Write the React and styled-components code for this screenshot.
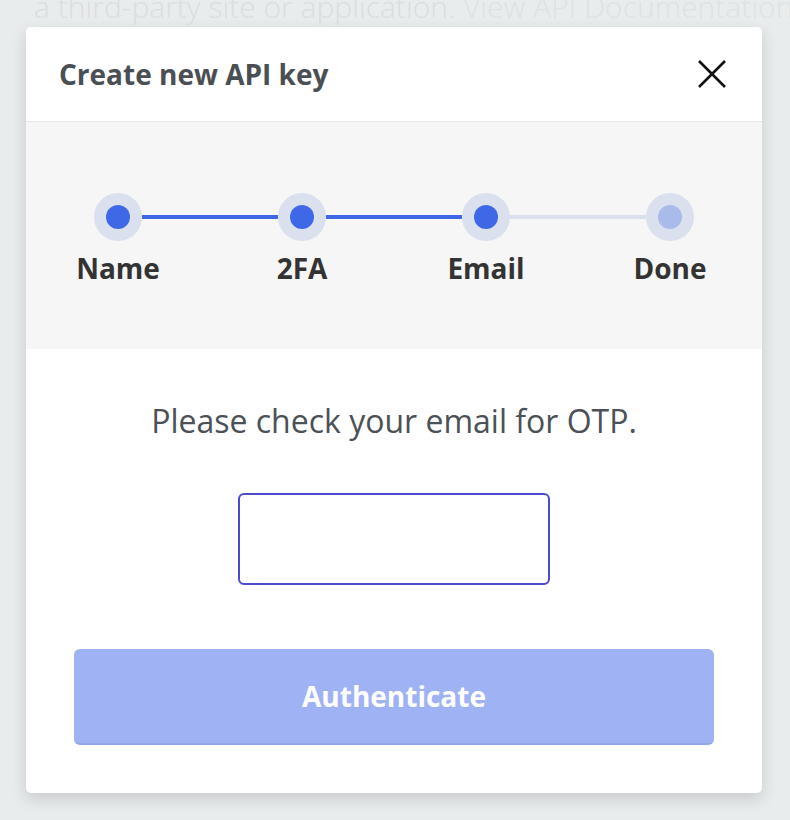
import React, { useState } from 'react';
import styled, { createGlobalStyle } from 'styled-components';

const GlobalStyle = createGlobalStyle`
    html, body {
        margin: 0;
        padding: 0;
        background: #e9eced;
        font-family: "Open Sans", "Liberation Sans", sans-serif;
    }
`;

const steps = [
    { label: 'Name', done: true },
    { label: '2FA', done: true },
    { label: 'Email', done: true },
    { label: 'Done', done: false },
];

function App() {
    const [otp, setOtp] = useState('');

    return (
        <Page>
            <GlobalStyle />
            <BehindText>
                a third-party site or application. <span>View API Documentation</span>
            </BehindText>
            <Modal>
                <Header>
                    <Title>Create new API key</Title>
                    <CloseButton aria-label="Close">
                        <svg width="30" height="30" viewBox="0 0 30 30">
                            <path d="M2 2 L28 28 M28 2 L2 28" stroke="#111" strokeWidth="2.6" fill="none" />
                        </svg>
                    </CloseButton>
                </Header>

                <StepperArea>
                    <Stepper>
                        {steps.map((step, i) => (
                            <React.Fragment key={step.label}>
                                {i > 0 && <Connector $active={step.done} />}
                                <Step>
                                    <Dot $active={step.done} />
                                    <StepLabel>{step.label}</StepLabel>
                                </Step>
                            </React.Fragment>
                        ))}
                    </Stepper>
                </StepperArea>

                <Body>
                    <Message>Please check your email for OTP.</Message>
                    <OtpInput value={otp} onChange={(e) => setOtp(e.target.value)} />
                    <SubmitButton disabled={!otp}>Authenticate</SubmitButton>
                </Body>
            </Modal>
        </Page>
    );
}

const Page = styled.div`
    width: 790px;
    height: 820px;
    overflow: hidden;
    padding: 0 28px 0 26px;
    box-sizing: border-box;
`;

const BehindText = styled.p`
    margin: -14px -40px 0 8px;
    height: 41px;
    font-size: 30px;
    font-weight: 300;
    line-height: 41px;
    color: #d9dee0;
    white-space: nowrap;

    span {
        color: #dde2e6;
    }
`;

const Modal = styled.div`
    background: #fff;
    border-radius: 5px;
    box-shadow: 0 6px 16px rgba(0, 0, 0, 0.14);
    overflow: hidden;
`;

const Header = styled.div`
    height: 94px;
    display: flex;
    align-items: center;
    justify-content: space-between;
    padding: 0 35px 0 33px;
    border-bottom: 1px solid #e6e7e8;
`;

const Title = styled.h2`
    margin: 0;
    font-size: 28px;
    line-height: 38px;
    font-weight: 700;
    color: #4a4f54;
`;

const CloseButton = styled.button`
    border: none;
    background: none;
    padding: 0;
    display: flex;
    cursor: pointer;
`;

const StepperArea = styled.div`
    height: 227px;
    background: #f6f6f6;
    padding-top: 71px;
    box-sizing: border-box;
`;

const Stepper = styled.div`
    display: flex;
    padding-left: 68px;
`;

const Step = styled.div`
    width: 48px;
    display: flex;
    flex-direction: column;
    align-items: center;
`;

const Dot = styled.div`
    width: 48px;
    height: 48px;
    border-radius: 50%;
    background: #dae0ee;
    display: flex;
    align-items: center;
    justify-content: center;

    &::after {
        content: '';
        width: 24px;
        height: 24px;
        border-radius: 50%;
        background: ${({ $active }) => ($active ? '#3f68e6' : '#a8bbeb')};
    }
`;

const Connector = styled.div`
    flex: 0 0 136px;
    height: 4px;
    margin-top: 22px;
    background: ${({ $active }) => ($active ? '#3f68e6' : '#dae0ee')};
`;

const StepLabel = styled.span`
    margin-top: 8px;
    font-size: 28px;
    line-height: 38px;
    font-weight: 700;
    color: #333;
    white-space: nowrap;
`;

const Body = styled.div`
    display: flex;
    flex-direction: column;
    align-items: center;
    padding: 50px 48px 48px;
`;

const Message = styled.p`
    margin: 0;
    font-size: 32px;
    line-height: 44px;
    color: #4b5156;
`;

const OtpInput = styled.input`
    margin-top: 50px;
    width: 312px;
    height: 92px;
    box-sizing: border-box;
    border: 2px solid #4b4ad3;
    border-radius: 6px;
    outline: none;
    font-size: 28px;
    text-align: center;
    font-family: inherit;
`;

const SubmitButton = styled.button`
    margin-top: 64px;
    width: 640px;
    height: 96px;
    border: none;
    border-bottom: 2px solid #93a7e4;
    border-radius: 6px;
    background: #9fb3f4;
    color: #fff;
    font-family: inherit;
    font-size: 28px;
    font-weight: 700;

    &:not(:disabled) {
        background: #3f68e6;
        cursor: pointer;
    }
`;

export default App;
